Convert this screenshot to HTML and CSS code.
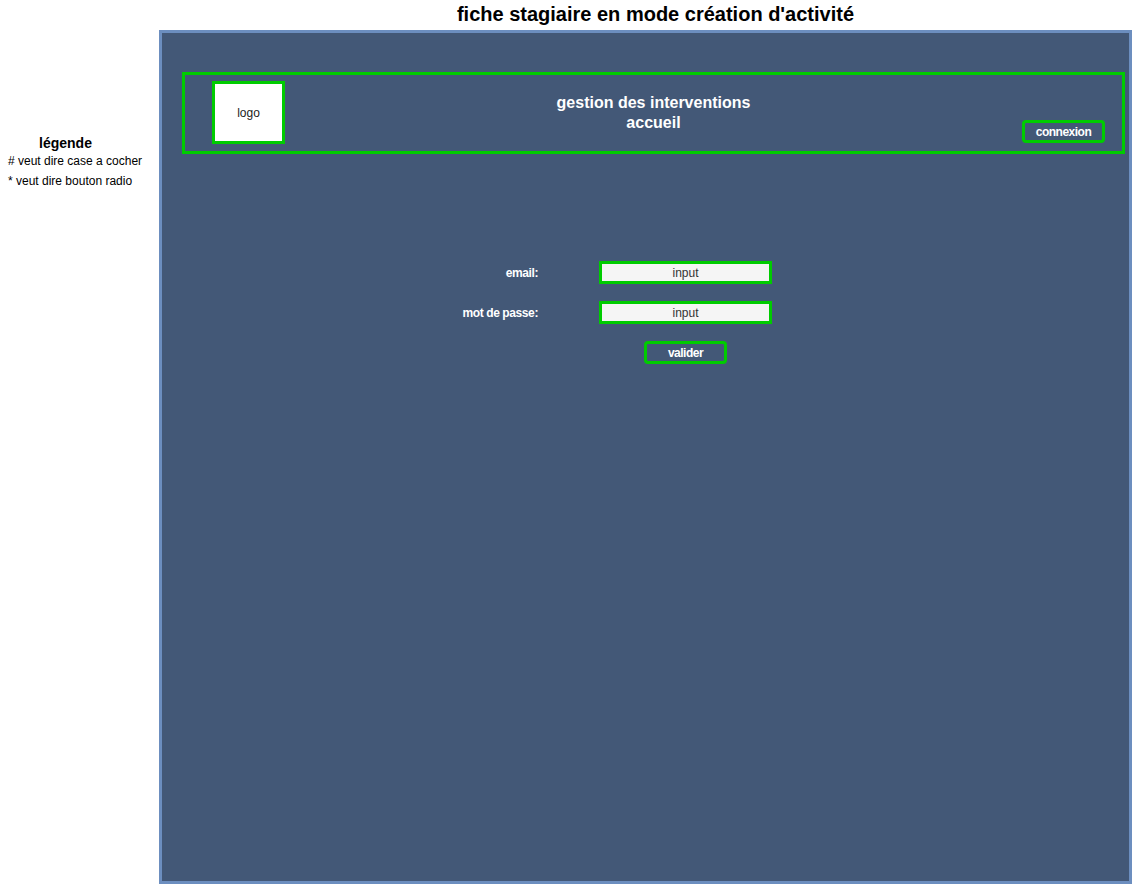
FILE: index.html
```html
<!DOCTYPE html>
<html lang="fr">
<head>
<meta charset="utf-8">
<title>fiche stagiaire</title>
<link rel="stylesheet" href="styles.css">
</head>
<body>
<aside class="legend">
  <div class="legend-title">légende</div>
  <div class="legend-line legend-line-first"># veut dire case a cocher</div>
  <div class="legend-line">* veut dire bouton radio</div>
</aside>
<main class="page">
  <h1 class="page-title">fiche stagiaire en mode création d'activité</h1>
  <section class="frame">
    <header class="header">
      <div class="logo">logo</div>
      <div class="header-title">gestion des interventions<br>accueil</div>
      <div class="header-right"><button class="btn btn-connexion">connexion</button></div>
    </header>
    <form class="login">
      <label class="label">email:</label>
      <div class="input">input</div>
      <label class="label">mot de passe:</label>
      <div class="input">input</div>
      <button class="btn btn-valider" type="button">valider</button>
    </form>
  </section>
</main>
</body>
</html>
```
FILE: styles.css
```css
* { box-sizing: border-box; }
html, body { margin: 0; padding: 0; background: #fff; }
body {
  display: flex;
  width: 1132px;
  height: 884px;
  overflow: hidden;
  font-family: "Liberation Sans", Arial, sans-serif;
  color: #000;
}
.legend {
  width: 159px;
  flex: none;
  padding-top: 134px;
  padding-left: 8px;
}
.legend-title {
  width: 115px;
  text-align: center;
  font-weight: bold;
  font-size: 14px;
  line-height: 18px;
}
.legend-line {
  font-size: 12px;
  line-height: 20px;
}
.legend-line-first { margin-top: -1px; }
.page {
  width: 973px;
  flex: none;
  display: flex;
  flex-direction: column;
}
.page-title {
  margin: 0;
  height: 30px;
  font-size: 20px;
  line-height: 28px;
  font-weight: bold;
  text-align: center;
  padding-left: 20px;
}
.frame {
  height: 854px;
  border: 3px solid #6c8ebf;
  background: #435877;
  padding: 39px 0 0 20px;
}
.header {
  width: 943px;
  height: 82px;
  border: 3px solid #00cc00;
  display: grid;
  grid-template-columns: 1fr auto 1fr;
}
.logo {
  margin: 6px 0 0 27px;
  width: 73px;
  height: 63px;
  border: 3px solid #00cc00;
  background: #fff;
  display: flex;
  align-items: center;
  justify-content: center;
  font-size: 12px;
  color: #222;
}
.header-title {
  align-self: center;
  text-align: center;
  color: #fff;
  font-weight: bold;
  font-size: 16px;
  line-height: 20px;
  margin-top: 0;
}
.header-right {
  display: flex;
  justify-content: flex-end;
  align-items: flex-end;
  padding: 0 17px 8px 0;
}
.btn {
  border: 3px solid #00cc00;
  border-radius: 4px;
  background: transparent;
  color: #fff;
  font-family: "Liberation Sans", Arial, sans-serif;
  font-weight: bold;
  font-size: 12px;
  letter-spacing: -0.5px;
  width: 83px;
  height: 23px;
  padding: 2px 0 0;
  line-height: 15px;
}
.login {
  margin: 107px 0 0 256px;
  display: grid;
  grid-template-columns: 100px 173px;
  column-gap: 61px;
  row-gap: 17px;
  align-items: center;
}
.label {
  text-align: right;
  color: #fff;
  font-weight: bold;
  font-size: 12px;
  letter-spacing: -0.4px;
  padding-top: 1px;
}
.input {
  height: 23px;
  border: 3px solid #00cc00;
  background: #f5f5f5;
  color: #333;
  font-size: 12px;
  line-height: 17px;
  padding-top: 1px;
  text-align: center;
}
.btn-valider {
  grid-column: 2;
  justify-self: center;
}
```
